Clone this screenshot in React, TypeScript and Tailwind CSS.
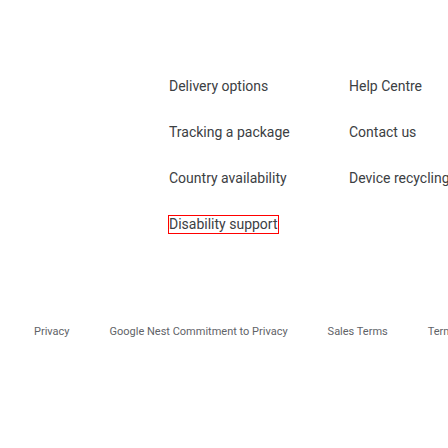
import React from "react";

const leftLinks = ["Delivery options", "Tracking a package", "Country availability", "Disability support"];
const rightLinks = ["Help Centre", "Contact us", "Device recycling"];
const footerLinks = ["Privacy", "Google Nest Commitment to Privacy", "Sales Terms", "Terms of Service"];

export default function App() {
  return (
    <div className="w-full h-[448px] overflow-hidden bg-white font-['Roboto',sans-serif] whitespace-nowrap">
      <div className="pt-[63px] pl-[169px] flex">
        <ul className="w-[180px] shrink-0">
          {leftLinks.map((label, i) => (
            <li key={label} className="h-[46px] flex items-center">
              <a
                href="#"
                className={
                  "text-[14px] leading-[17px] text-[#3c4043] " +
                  (i === 3 ? "outline outline-1 outline-[#ff0000]" : "")
                }
              >
                {label}
              </a>
            </li>
          ))}
        </ul>
        <ul className="shrink-0">
          {rightLinks.map((label) => (
            <li key={label} className="h-[46px] flex items-center">
              <a href="#" className="text-[14px] leading-[17px] text-[#3c4043]">
                {label}
              </a>
            </li>
          ))}
        </ul>
      </div>

      <footer className="mt-[78px] pl-[34px] flex gap-10">
        {footerLinks.map((label) => (
          <a key={label} href="#" className="shrink-0 text-[11px] leading-[14px] text-[#5f6368]">
            {label}
          </a>
        ))}
      </footer>
    </div>
  );
}
